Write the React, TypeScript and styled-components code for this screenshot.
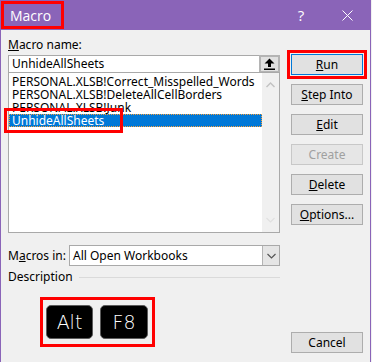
import React from "react";
import styled, { createGlobalStyle } from "styled-components";

const Global = createGlobalStyle`
  html, body { margin: 0; padding: 0; }
  body {
    width: 372px; height: 362px; overflow: hidden;
    background: #f0f0f0;
    font-family: "Noto Sans", "DejaVu Sans", sans-serif;
    font-size: 12px;
    color: #000;
  }
  * { box-sizing: border-box; }
`;

const PURPLE = "#8a64b8";
const RED = "#ff0000";

const Window = styled.div`
  width: 371px;
  height: 362px;
  display: flex;
  flex-direction: column;
  background: #f0f0f0;
  border-left: 1px solid ${PURPLE};
  border-right: 1px solid ${PURPLE};
`;

const TitleBar = styled.div`
  height: 30px;
  flex: none;
  display: flex;
  align-items: flex-start;
  background: ${PURPLE};
  color: #fff;
`;

const TitleText = styled.div`
  margin-top: 1px;
  width: 63px;
  height: 28px;
  border: 3px solid ${RED};
  padding-left: 6px;
  display: flex;
  align-items: center;
  font-family: "Open Sans", "Noto Sans", sans-serif;
  font-weight: 400;
  font-size: 14px;
`;

const Spacer = styled.div`
  flex: 1;
`;

const CaptionButton = styled.div`
  width: 46px;
  height: 30px;
  display: flex;
  align-items: center;
  justify-content: center;
  font-family: "Open Sans", "Noto Sans", sans-serif;
  font-size: 15px;
`;

const Body = styled.div`
  flex: 1;
  display: flex;
  gap: 11px;
  padding: 7px 7px 9px 7px;
`;

const LeftColumn = styled.div`
  width: 272px;
  display: flex;
  flex-direction: column;
`;

const Label = styled.div`
  line-height: 16px;
  height: 16px;
  white-space: nowrap;
`;

const NameLabel = styled(Label)`
  margin-bottom: 2px;
`;

const InputRow = styled.div`
  height: 18px;
  display: flex;
`;

const TextInput = styled.div`
  flex: 1;
  background: #fff;
  border: 1px solid #a9a9a9;
  border-right: none;
  padding-left: 3px;
  line-height: 16px;
`;

const UpButton = styled.div`
  width: 21px;
  background: #e1e1e1;
  border: 2px solid #b4b4b4;
  display: flex;
  align-items: center;
  justify-content: center;
`;

const List = styled.div`
  height: 161px;
  margin-top: -1px;
  background: #fff;
  border: 1px solid #a9a9a9;
  display: flex;
`;

const Items = styled.div`
  flex: 1;
  padding-top: 2px;
`;

const Item = styled.div<{ $selected?: boolean }>`
  position: relative;
  height: 13px;
  line-height: 13px;
  padding-left: 3px;
  white-space: nowrap;
  background: ${(p) => (p.$selected ? "#0078d7" : "transparent")};
  color: ${(p) => (p.$selected ? "#fff" : "#000")};
  outline: ${(p) => (p.$selected ? "1px dotted #f7a03c" : "none")};
  outline-offset: -1px;
`;

const ItemHighlight = styled.span`
  position: absolute;
  left: -5px;
  top: -6px;
  width: 119px;
  height: 25px;
  border: 3px solid ${RED};
  pointer-events: none;
`;

const ScrollTrack = styled.div`
  width: 17px;
  background: #f0f0f0;
  display: flex;
  flex-direction: column;
  align-items: center;
  justify-content: space-between;
  padding: 9px 0 9px;
`;

const MacrosRow = styled.div`
  margin-top: 12px;
  height: 21px;
  display: flex;
  align-items: center;
`;

const MacrosLabel = styled(Label)`
  width: 61px;
`;

const Select = styled.div`
  flex: 1;
  height: 21px;
  display: flex;
  background: #fff;
  border: 1px solid #a9a9a9;
`;

const SelectValue = styled.div`
  flex: 1;
  padding-left: 3px;
  line-height: 19px;
`;

const SelectArrow = styled.div`
  width: 17px;
  background: #e5e5e5;
  border-left: 1px solid #b4b4b4;
  display: flex;
  align-items: center;
  justify-content: center;
`;

const DescriptionRow = styled.div`
  margin-top: 3px;
  height: 16px;
  display: flex;
  align-items: center;
`;

const Rule = styled.div`
  flex: 1;
  height: 1px;
  margin-left: 6px;
  background: #dadada;
`;

const KeysBox = styled.div`
  margin-top: 12px;
  margin-left: 32px;
  align-self: flex-start;
  display: flex;
  gap: 7px;
  border: 3px solid ${RED};
  padding: 5px 4px 5px 3px;
`;

const Key = styled.div<{ $w: number }>`
  width: ${(p) => p.$w}px;
  height: 34px;
  background: #000;
  border: 1px solid #5c5c5c;
  border-radius: 5px;
  color: #fff;
  display: flex;
  align-items: center;
  justify-content: center;
  font-family: "DejaVu Sans", "Lato", sans-serif;
  font-weight: 200;
  font-size: 19px;
`;

const RightColumn = styled.div`
  width: 72px;
  display: flex;
  flex-direction: column;
  gap: 9px;
  padding-top: 17px;
`;

const Button = styled.div<{ $default?: boolean; $disabled?: boolean; $marked?: boolean }>`
  height: 21px;
  display: flex;
  align-items: center;
  justify-content: center;
  background: ${(p) => (p.$disabled ? "#e6e6e6" : "#e1e1e1")};
  border: 1px solid
    ${(p) => (p.$default ? "#0078d7" : p.$disabled ? "#c8c8c8" : "#adadad")};
  color: ${(p) => (p.$disabled ? "#a0a0a0" : "#000")};
  outline: ${(p) => (p.$marked ? `3px solid ${RED}` : "none")};
  outline-offset: 1px;
  white-space: nowrap;
`;

const CancelButton = styled(Button)`
  margin-top: auto;
`;

const U = styled.span`
  text-decoration: underline;
  text-underline-offset: 1px;
`;

const CloseIcon = () => (
  <svg width="11" height="11" viewBox="0 0 11 11">
    <path d="M0.5 0.5 L10.5 10.5 M10.5 0.5 L0.5 10.5" stroke="#fff" strokeWidth="1" />
  </svg>
);

const UpArrowIcon = () => (
  <svg width="11" height="12" viewBox="0 0 11 12">
    <path d="M5.5 0.5 L10.5 5.5 L7 5.5 L7 9 L4 9 L4 5.5 L0.5 5.5 Z" fill="#000" />
    <rect x="0" y="10.5" width="11" height="1.5" fill="#000" />
  </svg>
);

const ChevronUp = () => (
  <svg width="9" height="6" viewBox="0 0 9 6">
    <path d="M0.5 5 L4.5 1 L8.5 5" stroke="#c2c2c2" strokeWidth="1.4" fill="none" />
  </svg>
);

const ChevronDown = ({ color }: { color: string }) => (
  <svg width="9" height="6" viewBox="0 0 9 6">
    <path d="M0.5 1 L4.5 5 L8.5 1" stroke={color} strokeWidth="1.2" fill="none" />
  </svg>
);

const macros = [
  "PERSONAL.XLSB!Correct_Misspelled_Words",
  "PERSONAL.XLSB!DeleteAllCellBorders",
  "PERSONAL.XLSB!Junk",
];

export default function App() {
  return (
    <>
      <Global />
      <Window>
        <TitleBar>
          <TitleText>Macro</TitleText>
          <Spacer />
          <CaptionButton>?</CaptionButton>
          <CaptionButton>
            <CloseIcon />
          </CaptionButton>
        </TitleBar>
        <Body>
          <LeftColumn>
            <NameLabel>
              <U>M</U>acro name:
            </NameLabel>
            <InputRow>
              <TextInput>UnhideAllSheets</TextInput>
              <UpButton>
                <UpArrowIcon />
              </UpButton>
            </InputRow>
            <List>
              <Items>
                {macros.map((m) => (
                  <Item key={m}>{m}</Item>
                ))}
                <Item $selected>
                  UnhideAllSheets
                  <ItemHighlight />
                </Item>
              </Items>
              <ScrollTrack>
                <ChevronUp />
                <ChevronDown color="#e0e0e0" />
              </ScrollTrack>
            </List>
            <MacrosRow>
              <MacrosLabel>
                M<U>a</U>cros in:
              </MacrosLabel>
              <Select>
                <SelectValue>All Open Workbooks</SelectValue>
                <SelectArrow>
                  <ChevronDown color="#555" />
                </SelectArrow>
              </Select>
            </MacrosRow>
            <DescriptionRow>
              <Label>Description</Label>
              <Rule />
            </DescriptionRow>
            <KeysBox>
              <Key $w={47}>Alt</Key>
              <Key $w={48}>F8</Key>
            </KeysBox>
          </LeftColumn>
          <RightColumn>
            <Button $default $marked>
              <U>R</U>un
            </Button>
            <Button>
              <U>S</U>tep Into
            </Button>
            <Button>
              <U>E</U>dit
            </Button>
            <Button $disabled>Create</Button>
            <Button>
              <U>D</U>elete
            </Button>
            <Button>
              <U>O</U>ptions...
            </Button>
            <CancelButton>Cancel</CancelButton>
          </RightColumn>
        </Body>
      </Window>
    </>
  );
}
